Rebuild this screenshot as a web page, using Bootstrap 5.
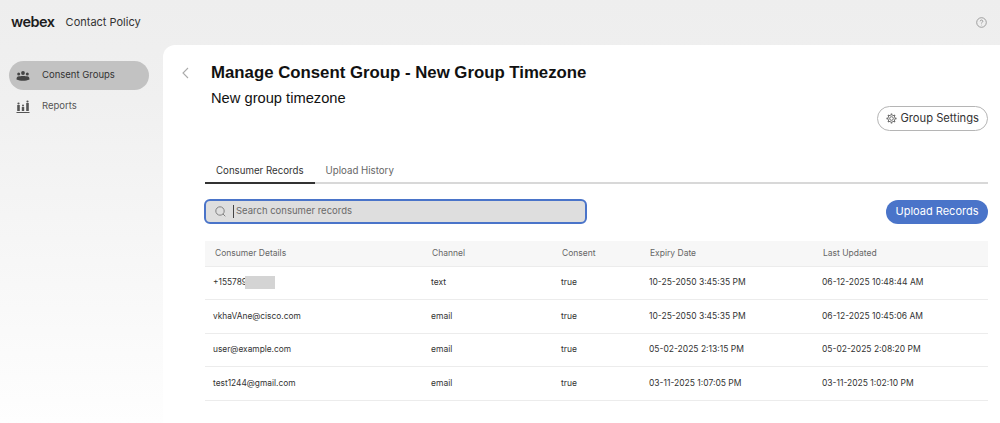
<!DOCTYPE html>
<html lang="en">
<head>
<meta charset="utf-8">
<title>Contact Policy</title>
<link rel="stylesheet" href="https://cdn.jsdelivr.net/npm/bootstrap@5.3.0/dist/css/bootstrap.min.css">
<style>
html,body{height:423px;overflow:hidden}
body{background:linear-gradient(#eeeeee,#f0f0f0 100px,#fefefe);font-family:"Inter","Liberation Sans",Arial,sans-serif;color:#222}
.top-strip{height:45px;padding:0 13px 0 11px}
.wx-logo{font:600 14.5px/1 "Inter",sans-serif;letter-spacing:-.5px;color:#1d1d1d}
.wx-app{font-size:11px;color:#333;margin-left:11px}
.side-rail{width:163px;padding:16px 14px 0 9px}
.rail-item{height:29px;border-radius:15px;padding-left:6px;font-size:9.5px;color:#555;margin-bottom:2px}
.rail-item.is-on{background:#c2c2c2;color:#333}
.rail-icon{width:16px;margin-right:11px}
.work-area{background:#fff;border-top-left-radius:12px;height:378px;padding:0 12px 0 18px}
.back-chev{width:30px;padding-top:14px}
.ttl{font:700 16.8px/20px "Liberation Sans",Arial,sans-serif;color:#111;margin:18px 0 0}
.sub-ttl{font:400 14.7px/18px "Liberation Sans",Arial,sans-serif;color:#111;margin-top:6px}
.settings-btn{border:1px solid #b5b5b5;border-radius:13px;height:25px;background:#fff;font-size:11.2px;color:#333;padding:0 8px;gap:3px;margin-top:-1px}
.tab-row{margin-top:26px;margin-left:24px;border-bottom:2px solid #d8d8d8;height:27px}
.tab-row .nav-link{font-size:9.700px;color:#666;padding:0 11px;height:27px;line-height:27px;border:0;background:none;margin-bottom:-2px}
.tab-row .nav-link.active{color:#333;border-bottom:2px solid #333;background:none}
.search-row{margin:15px 0 0 23px}
.search-box{width:383px;height:25px;background:#dedede;border:2px solid #4a74c9;border-radius:6px;padding-left:9px}
.search-box input{background:transparent;border:0;outline:0;padding:0;font-size:9.500px;flex:1;color:#555;margin-left:2px;box-shadow:none}
.search-box input::placeholder{color:#6a6a6a}
.caret-bar{width:1px;height:13px;background:#444;margin-left:7px}
.upload-btn{background:#4a74c9;border:0;color:#fff;border-radius:12px;height:24px;width:102px;font-size:11px;padding:0}
.rec-wrap{margin:17px 0 0 24px}
.rec-table{table-layout:fixed;width:783px;margin:0;font-size:8.500px;color:#333}
.rec-table th{background:#f7f7f7;font-weight:400;color:#666;height:25px;padding:0 0 0 10px;vertical-align:middle;border-bottom:1px solid #ececec;font-size:8.500px}
.rec-table td{height:33.5px;padding:0 0 0 9px;vertical-align:middle;border-bottom:1.5px solid #ececec;color:#333}
.rec-table td:first-child{padding-left:8px;font-size:8.350px}
.redact{display:inline-block;position:relative;width:30px;height:13px;background:#d4d4d4;vertical-align:middle;margin-left:-2px}
.c1{width:217px}.c2{width:130px}.c3{width:88px}.c4{width:173px}
</style>
</head>
<body>
<header class="top-strip d-flex align-items-center justify-content-between">
  <div class="d-flex align-items-center"><span class="wx-logo">webex</span><span class="wx-app">Contact Policy</span></div>
  <svg width="11" height="11" viewBox="0 0 11 11" fill="none" stroke="#8a8a8a" stroke-width=".8"><circle cx="5.5" cy="5.5" r="4.8"/><path d="M4.2 4.3a1.3 1.3 0 1 1 1.9 1.2c-.4.2-.6.5-.6.9"/><path d="M5.5 7.8v.5"/></svg>
</header>
<div class="d-flex">
  <nav class="side-rail flex-shrink-0">
    <div class="rail-item is-on d-flex align-items-center">
      <svg class="rail-icon" height="10" viewBox="0 0 16 10" fill="#444"><circle cx="8" cy="2" r="1.900"/><circle cx="3.700" cy="3" r="1.500"/><circle cx="12.300" cy="3" r="1.500"/><path d="M1.500 8.500c0-2.300.8-3.300 2.500-3.300.9 0 1.500-.3 4-.3s3.100.3 4 .3c1.700 0 2.500 1 2.500 3.300-2 1-4 1.300-6.500 1.300s-4.500-.3-6.500-1.300z"/></svg>
      Consent Groups
    </div>
    <div class="rail-item d-flex align-items-center">
      <svg class="rail-icon" height="14" viewBox="0 0 16 14" fill="#555"><circle cx="3.500" cy="3.500" r="1.100"/><circle cx="8" cy="5.500" r="1"/><circle cx="12.500" cy="1.500" r="1.100"/><rect x="2.200" y="5" width="2.600" height="6"/><rect x="6.800" y="7" width="2.400" height="4"/><rect x="11.200" y="3" width="2.600" height="8"/><rect x="1.500" y="12" width="13" height="1"/></svg>
      Reports
    </div>
  </nav>
  <main class="work-area flex-grow-1">
    <div class="d-flex">
      <div class="back-chev"><svg width="9" height="12" viewBox="0 0 9 12" fill="none" stroke="#aaa" stroke-width="1.100"><path d="M7 1 2 6l5 5"/></svg></div>
      <div class="flex-grow-1">
        <h1 class="ttl">Manage Consent Group - New Group Timezone</h1>
        <div class="sub-ttl">New group timezone</div>
        <div class="d-flex justify-content-end">
          <button type="button" class="settings-btn d-flex align-items-center">
            <svg width="11" height="11" viewBox="0 0 12 12" fill="none" stroke="#666" stroke-width="1"><circle cx="6" cy="6" r="2"/><circle cx="6" cy="6" r="4"/><path stroke-width="1.500" d="M6 .5V2M6 10v1.500M.5 6H2M10 6h1.500M2.100 2.100l1 1M8.900 8.900l1 1M2.100 9.900l1-1M8.900 3.100l1-1"/></svg>
            Group Settings
          </button>
        </div>
      </div>
    </div>
    <ul class="nav tab-row">
      <li class="nav-item"><a class="nav-link active" href="#">Consumer Records</a></li>
      <li class="nav-item"><a class="nav-link" href="#">Upload History</a></li>
    </ul>
    <div class="search-row d-flex align-items-center justify-content-between">
      <div class="search-box d-flex align-items-center">
        <svg width="11" height="11" viewBox="0 0 11 11" fill="none" stroke="#777" stroke-width=".9"><circle cx="5" cy="5" r="4.200"/><path d="m8 8 2.300 2.300"/></svg>
        <span class="caret-bar"></span>
        <input type="text" placeholder="Search consumer records" aria-label="Search consumer records">
      </div>
      <button type="button" class="upload-btn">Upload Records</button>
    </div>
    <div class="rec-wrap">
      <table class="table rec-table">
        <colgroup><col class="c1"><col class="c2"><col class="c3"><col class="c4"><col></colgroup>
        <thead><tr><th>Consumer Details</th><th>Channel</th><th>Consent</th><th>Expiry Date</th><th>Last Updated</th></tr></thead>
        <tbody>
          <tr><td>+155789<span class="redact"></span></td><td>text</td><td>true</td><td>10-25-2050 3:45:35 PM</td><td>06-12-2025 10:48:44 AM</td></tr>
          <tr><td>vkhaVAne@cisco.com</td><td>email</td><td>true</td><td>10-25-2050 3:45:35 PM</td><td>06-12-2025 10:45:06 AM</td></tr>
          <tr><td>user@example.com</td><td>email</td><td>true</td><td>05-02-2025 2:13:15 PM</td><td>05-02-2025 2:08:20 PM</td></tr>
          <tr><td>test1244@gmail.com</td><td>email</td><td>true</td><td>03-11-2025 1:07:05 PM</td><td>03-11-2025 1:02:10 PM</td></tr>
        </tbody>
      </table>
    </div>
  </main>
</div>
<script src="https://cdn.jsdelivr.net/npm/bootstrap@5.3.0/dist/js/bootstrap.bundle.min.js"></script>
</body>
</html>
